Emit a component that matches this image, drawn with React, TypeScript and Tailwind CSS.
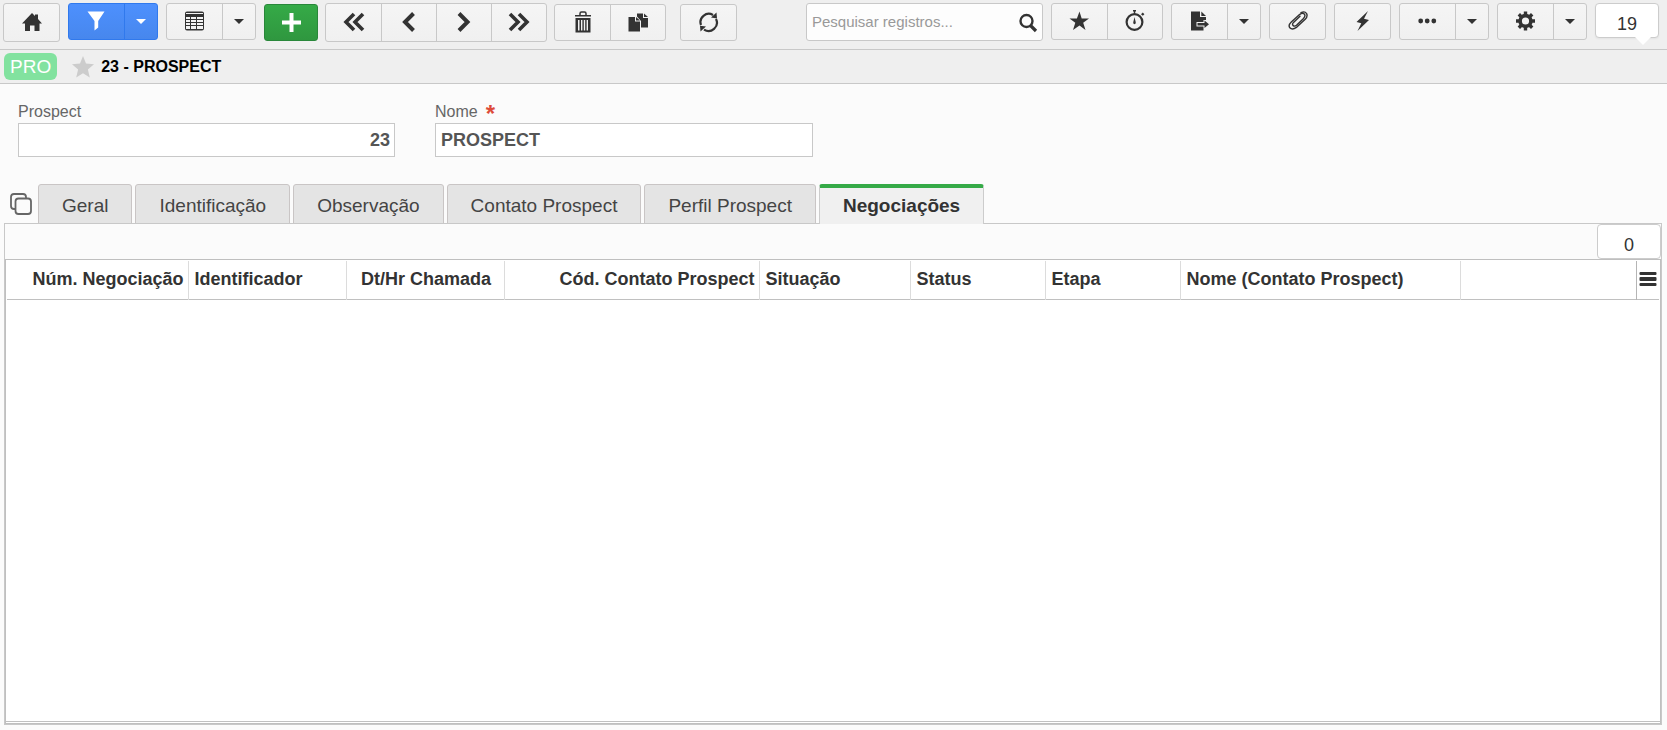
import React, { useState } from 'react';

const paths: Record<string, React.ReactNode> = {
  home: (
    <path d="M11 2 L14 5 V3.5 H17 V8 L21 12.5 H18.5 V20 H13.5 V14.5 H9 V20 H4 V12.5 H1 Z" />
  ),
  filter: <path d="M1.5 1.5 H18.5 L12.2 11 V17.5 L8.5 20.5 V11 Z" />,
  table: (
    <path
      fillRule="evenodd"
      d="M3 1.5 H18 Q20 1.5 20 3.5 V18.5 Q20 20.5 18 20.5 H3 Q1 20.5 1 18.5 V3.5 Q1 1.5 3 1.5 Z M2 3 V4 H19 V3 Z M2 7 V9 H6 V7 Z M7 7 V9 H12 V7 Z M13 7 V9 H19 V7 Z M2 10 V12 H6 V10 Z M7 10 V12 H12 V10 Z M13 10 V12 H19 V10 Z M2 13 V15 H6 V13 Z M7 13 V15 H12 V13 Z M13 13 V15 H19 V13 Z M2 16 V19 H6 V16 Z M7 16 V19 H12 V16 Z M13 16 V19 H19 V16 Z"
    />
  ),
  plus: <path d="M9.5 2 H13.5 V9.5 H21 V13.5 H13.5 V21 H9.5 V13.5 H2 V9.5 H9.5 Z" />,
  first: (
    <path
      fill="none"
      stroke="currentColor"
      strokeWidth="3.6"
      d="M11 3 L3 11 L11 19 M20 3 L12 11 L20 19"
    />
  ),
  prev: <path fill="none" stroke="currentColor" strokeWidth="4" d="M15.5 2.5 L7 11 L15.5 19.5" />,
  next: <path fill="none" stroke="currentColor" strokeWidth="4" d="M6 2.5 L14.5 11 L6 19.5" />,
  last: (
    <path
      fill="none"
      stroke="currentColor"
      strokeWidth="3.6"
      d="M2 3 L10 11 L2 19 M11 3 L19 11 L11 19"
    />
  ),
  trash: (
    <>
      <path d="M3 4 H19 V5.5 H3 Z" />
      <path fill="none" stroke="currentColor" strokeWidth="1.5" d="M8 4.5 V2.5 Q8 1 9.5 1 H12.5 Q14 1 14 2.5 V4.5" />
      <path
        fillRule="evenodd"
        d="M3.5 7 H18.5 V21.5 H3.5 Z M6 9 V19.5 H7.5 V9 Z M9 9 V19.5 H10.4 V9 Z M11.8 9 V19.5 H13.2 V9 Z M14.6 9 V19.5 H16 V9 Z"
      />
    </>
  ),
  copy: (
    <>
      <path d="M10 2.5 H16 V7 H21 V16.5 H14 V10 L10 5.5 Z" />
      <path d="M17 2.5 L21 6 H17 Z" />
      <path d="M1.5 6 H8 V10.5 H13 V20.5 H1.5 Z" />
      <path d="M9 6 L13 9.5 H9 Z" />
    </>
  ),
  refresh: (
    <>
      <path
        fill="none"
        stroke="currentColor"
        strokeWidth="2.2"
        d="M3 14 A8.3 8.3 0 0 1 15 4 M18 8 A8.3 8.3 0 0 1 6 18.6"
      />
      <path d="M18.5 1.5 L19 7.5 L13 6.5 Z" />
      <path d="M2.5 20.5 L2 14.8 L8 15.6 Z" />
    </>
  ),
  star: <path d="M10.5 1.5 L12.7 8.5 H20 L14.2 12.7 L16.5 20 L10.5 15.4 L4 20 L6.3 12.7 L0.5 8.5 H7.9 Z" />,
  timer: (
    <>
      <circle cx="10.5" cy="12" r="7.9" fill="none" stroke="currentColor" strokeWidth="2.2" />
      <path d="M9 0 H12 V1.5 H9 Z M9.8 1.5 H11.2 V4 H9.8 Z M10.5 7 L11.8 12.5 Q11.8 14.3 10.5 14.3 Q9.2 14.3 9.2 12.5 Z" />
      <path d="M17 4.2 L18.8 2.6 L20.4 4.2 L18.8 5.8 Z" />
    </>
  ),
  exportFile: (
    <>
      <path d="M2 1.5 H11 V7 H17 V10 H14.5 V12 H7.5 V16.5 H14.5 V20.5 H2 Z" />
      <path d="M12.3 1.5 L17 6 H12.3 Z" />
      <path d="M8.5 13 H15.5 V10.5 L20 14.3 L15.5 18 V15.5 H8.5 Z" />
    </>
  ),
  clip: (
    <path
      fill="none"
      stroke="currentColor"
      strokeWidth="1.4"
      strokeLinecap="round"
      d="M13 6.2 L6.5 12.4 Q4.8 14.4 6.2 15.6 Q7.6 16.8 9.5 15.2 L16.5 8.5 Q18.9 5.6 17.3 4 Q15.4 2.2 12.5 4.6 L4.3 12 Q0.9 15.2 2.8 17.8 Q5.3 20.4 9.4 17.4 L18.2 9.3 Q21 6.2 19.6 3.6 Q17.8 0.8 14 2.6"
    />
  ),
  bolt: <path d="M16 1 L4.5 12 L9.3 13.2 L5.5 21 L17 10 L12 8.8 Z" />,
  dots: (
    <>
      <circle cx="3.7" cy="11" r="2.4" />
      <circle cx="10.2" cy="11" r="2.4" />
      <circle cx="16.8" cy="11" r="2.4" />
    </>
  ),
  gear: (
    <>
      <circle cx="10.5" cy="11" r="5.4" fill="none" stroke="currentColor" strokeWidth="3.6" />
      <path
        fill="none"
        stroke="currentColor"
        strokeWidth="3.4"
        d="M10.5 1.5 V5 M10.5 17 V20.5 M1 11 H4.5 M16.5 11 H20 M3.8 4.3 L6.3 6.8 M14.7 15.2 L17.2 17.7 M3.8 17.7 L6.3 15.2 M14.7 6.8 L17.2 4.3"
      />
    </>
  ),
  search: (
    <>
      <circle cx="9.5" cy="10" r="6" fill="none" stroke="currentColor" strokeWidth="2.4" />
      <path stroke="currentColor" strokeWidth="3.2" d="M13.5 14.5 L19 20" />
    </>
  ),
  menu: (
    <>
      <rect x="2.5" y="4" width="17" height="3" rx="1" />
      <rect x="2.5" y="9" width="17" height="4" rx="1" />
      <rect x="2.5" y="15" width="17" height="3" rx="1" />
    </>
  ),
};

function Icon({ name }: { name: string }) {
  return (
    <svg viewBox="0 0 22 22" className="h-[22px] w-[22px] shrink-0" fill="currentColor" aria-hidden="true">
      {paths[name]}
    </svg>
  );
}

type GroupProps = {
  items: { icon: string; label: string }[];
  caret?: string;
  tall?: boolean;
  blue?: boolean;
};

function ButtonGroup({ items, caret, tall, blue }: GroupProps) {
  const colors = blue
    ? 'border-[#3079ed] bg-linear-to-b from-[#4d90fe] to-[#4787ed] text-white'
    : 'border-[#c8c8c8] bg-linear-to-b from-[#f5f5f5] to-[#f0f0f0] text-[#333]';
  return (
    <div className={`flex shrink-0 rounded-[3px] border ${tall ? 'h-[39px]' : 'h-[37px]'} ${colors}`}>
      {items.map((item, i) => (
        <button
          key={item.label}
          type="button"
          aria-label={item.label}
          className={`flex w-[55px] items-center justify-center border-inherit pb-[2px] ${i > 0 ? 'border-l' : ''}`}
        >
          <Icon name={item.icon} />
        </button>
      ))}
      {caret && (
        <button
          type="button"
          aria-label={caret}
          className="flex w-[33px] items-center justify-center border-l border-inherit"
        >
          <svg viewBox="0 0 10 5" className="h-[5px] w-[10px]" fill="currentColor" aria-hidden="true">
            <path d="M0 0 H10 L5 5 Z" />
          </svg>
        </button>
      )}
    </div>
  );
}

const tabs = ['Geral', 'Identificação', 'Observação', 'Contato Prospect', 'Perfil Prospect', 'Negociações'];

const columns = [
  { title: 'Núm. Negociação', className: 'w-[181px] text-right' },
  { title: 'Identificador', className: 'w-[158px] text-left' },
  { title: 'Dt/Hr Chamada', className: 'w-[158px] text-center' },
  { title: 'Cód. Contato Prospect', className: 'w-[255px] text-right' },
  { title: 'Situação', className: 'w-[151px] text-left' },
  { title: 'Status', className: 'w-[135px] text-left' },
  { title: 'Etapa', className: 'w-[135px] text-left' },
  { title: 'Nome (Contato Prospect)', className: 'w-[280px] text-left' },
];

export default function App() {
  const [activeTab, setActiveTab] = useState('Negociações');
  const [search, setSearch] = useState('');
  const [name, setName] = useState('PROSPECT');

  return (
    <div className="flex min-h-screen flex-col bg-[#fbfbfb] font-['Liberation_Sans',Arial,sans-serif] text-[#333]">
      <header className="flex h-[50px] items-start justify-between border-b border-[#c8c8c8] bg-[#efefef] pt-[3px] pr-2 pl-[3px]">
        <div className="flex gap-2">
          <div className="flex items-start gap-2">
            <ButtonGroup tall items={[{ icon: 'home', label: 'Início' }]} />
            <ButtonGroup blue items={[{ icon: 'filter', label: 'Filtrar' }]} caret="Opções de filtro" />
            <ButtonGroup items={[{ icon: 'table', label: 'Grade' }]} caret="Opções da grade" />
          </div>
          <div className="flex items-center gap-[7px]">
            <button
              type="button"
              aria-label="Adicionar"
              className="flex h-[37px] w-[54px] items-center justify-center rounded-[3px] border border-[#29873a] bg-linear-to-b from-[#35aa47] to-[#2f973f] pb-[2px] text-white"
            >
              <Icon name="plus" />
            </button>
            <ButtonGroup
              tall
              items={[
                { icon: 'first', label: 'Primeiro' },
                { icon: 'prev', label: 'Anterior' },
                { icon: 'next', label: 'Próximo' },
                { icon: 'last', label: 'Último' },
              ]}
            />
            <ButtonGroup
              items={[
                { icon: 'trash', label: 'Excluir' },
                { icon: 'copy', label: 'Duplicar' },
              ]}
            />
            <div className="ml-[7px]">
              <ButtonGroup items={[{ icon: 'refresh', label: 'Atualizar' }]} />
            </div>
          </div>
        </div>

        <div className="flex items-start gap-2">
          <div className="flex h-[38px] w-[237px] items-center rounded-[3px] border border-[#c8c8c8] bg-[#fdfdfd] pr-[3px] pl-[5px]">
            <input
              type="text"
              aria-label="Pesquisar registros"
              placeholder="Pesquisar registros..."
              value={search}
              onChange={(e) => setSearch(e.target.value)}
              className="min-w-0 flex-1 bg-transparent text-[15px] outline-none placeholder:text-[#999]"
            />
            <button type="button" aria-label="Pesquisar">
              <Icon name="search" />
            </button>
          </div>
          <ButtonGroup
            items={[
              { icon: 'star', label: 'Favoritos' },
              { icon: 'timer', label: 'Cronômetro' },
            ]}
          />
          <ButtonGroup items={[{ icon: 'exportFile', label: 'Exportar' }]} caret="Opções de exportação" />
          <ButtonGroup items={[{ icon: 'clip', label: 'Anexos' }]} />
          <ButtonGroup items={[{ icon: 'bolt', label: 'Ações' }]} />
          <ButtonGroup items={[{ icon: 'dots', label: 'Mais' }]} caret="Mais opções" />
          <ButtonGroup items={[{ icon: 'gear', label: 'Configurações' }]} caret="Opções de configuração" />
          <div className="relative h-[35px] w-16 rounded-[4px] border border-[#ccc] bg-white pt-2 text-center text-[18px] leading-6 shadow-xs">
            19
            <svg viewBox="0 0 16 8" className="absolute top-full right-[7px] h-2 w-4" aria-hidden="true">
              <path d="M0 0 H16 L8 8 Z" fill="#fff" />
            </svg>
          </div>
        </div>
      </header>

      <div className="flex h-[34px] items-center border-b border-[#c8c8c8] bg-[#efefef] pl-1">
        <span className="rounded-[6px] bg-[#82e29f] px-[6px] text-[19px] leading-[27px] text-white">PRO</span>
        <button type="button" aria-label="Favoritar" className="mr-[7px] ml-[15px] text-[#ccc]">
          <svg viewBox="0 0 22 22" className="h-[22px] w-[22px]" fill="currentColor" aria-hidden="true">
            <path d="M11 0 L14 7.6 L22 8.2 L15.9 13.4 L17.8 21.6 L11 17.2 L4.2 21.6 L6.1 13.4 L0 8.2 L8 7.6 Z" />
          </svg>
        </button>
        <h1 className="text-[16px] font-bold text-black">23 - PROSPECT</h1>
      </div>

      <main className="flex flex-1 flex-col pt-4 pb-[5px]">
        <div className="flex gap-10 px-[18px]">
          <div className="flex w-[377px] flex-col">
            <label htmlFor="prospect" className="h-[23px] text-[16px] leading-6 text-[#666]">
              Prospect
            </label>
            <input
              id="prospect"
              type="text"
              readOnly
              value="23"
              className="h-[34px] border border-[#c8c8c8] bg-white px-1 text-right text-[18px] font-bold text-[#555] outline-none"
            />
          </div>
          <div className="flex w-[378px] flex-col">
            <label htmlFor="nome" className="flex h-[23px] gap-2 text-[16px] leading-6 text-[#666]">
              Nome
              <span className="text-[24px] leading-7 font-bold text-[#dd4b39]">*</span>
            </label>
            <input
              id="nome"
              type="text"
              value={name}
              onChange={(e) => setName(e.target.value)}
              className="h-[34px] border border-[#c8c8c8] bg-white px-[5px] text-[18px] font-bold text-[#555] outline-none"
            />
          </div>
        </div>

        <div className="mt-[27px] flex items-center pl-[10px]">
          <button type="button" aria-label="Visualização das abas" className="mr-[6px] text-[#666]">
            <svg
              viewBox="0 0 22 22"
              className="h-[22px] w-[22px]"
              fill="none"
              stroke="currentColor"
              strokeWidth="1.8"
              aria-hidden="true"
            >
              <rect x="5.5" y="5.5" width="15.5" height="15.5" rx="3" />
              <path d="M5.5 16 H4 Q1 16 1 13 V4 Q1 1 4 1 H13 Q16 1 16 4 V5.5" />
            </svg>
          </button>
          <div role="tablist" className="flex h-10 gap-[3px]">
            {tabs.map((tab) => (
              <button
                key={tab}
                type="button"
                role="tab"
                aria-selected={tab === activeTab}
                onClick={() => setActiveTab(tab)}
                className={
                  tab === activeTab
                    ? 'relative z-10 rounded-t-[3px] border-x border-t-4 border-x-[#ccc] border-t-[#35aa47] bg-[#f0f0f0] px-[23px] pt-[1px] text-[19px] font-bold'
                    : 'rounded-t-[3px] border border-[#c9c5c5] bg-[#e4e4e4] px-[23px] pt-1 text-[19px] text-[#444]'
                }
              >
                {tab}
              </button>
            ))}
          </div>
        </div>

        <section className="-mt-px mr-[5px] ml-1 flex flex-1 flex-col border border-[#c8c8c8]">
          <div className="flex justify-end">
            <div className="h-[35px] w-16 rounded-[4px] border border-[#ccc] bg-white pt-2 text-center text-[18px] leading-6">
              0
            </div>
          </div>
          <div className="flex flex-1 flex-col border border-[#bfbfbf] bg-white pb-[1px]">
            <div className="flex-1 border-b border-[#c0c0c0] px-[1px] pt-[1px]">
              <table className="w-full table-fixed border-b border-[#c0c0c0]">
                <thead>
                  <tr className="h-[38px]">
                    {columns.map((column) => (
                      <th
                        key={column.title}
                        scope="col"
                        className={`border-r border-[#dcdcdc] pr-1 pl-[6px] text-[18px] font-bold whitespace-nowrap ${column.className}`}
                      >
                        {column.title}
                      </th>
                    ))}
                    <td />
                    <td className="w-[23px] border-l border-[#b5b5b5] pb-[2px]">
                      <button type="button" aria-label="Colunas" className="flex">
                        <Icon name="menu" />
                      </button>
                    </td>
                  </tr>
                </thead>
                <tbody />
              </table>
            </div>
          </div>
        </section>
      </main>
    </div>
  );
}
